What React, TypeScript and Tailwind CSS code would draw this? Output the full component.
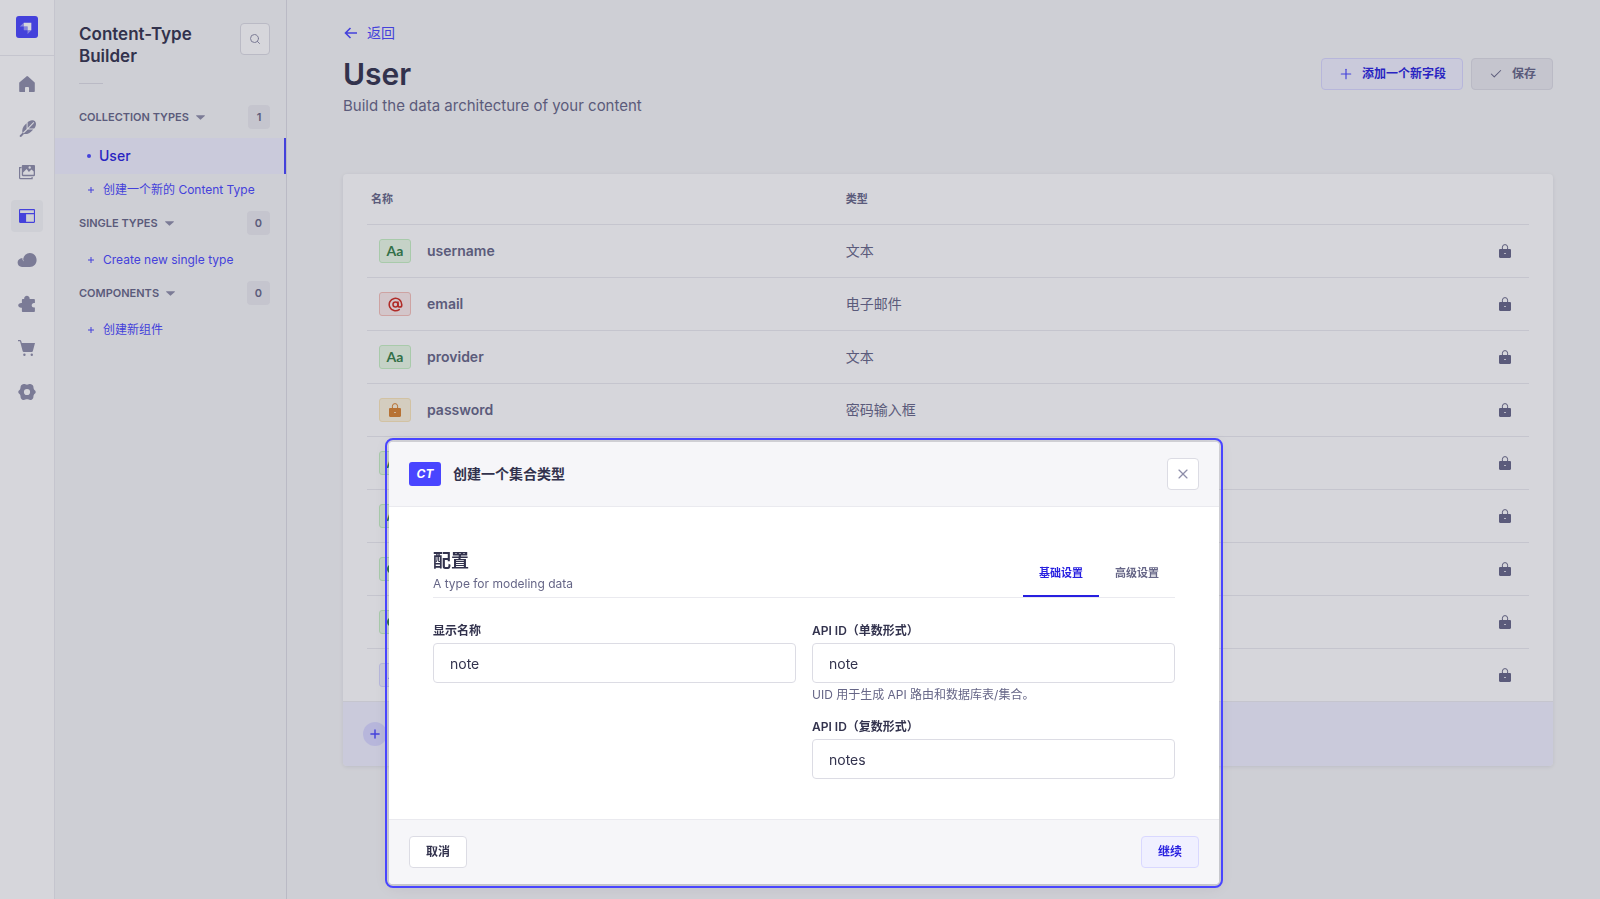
import type { ReactNode } from "react";
import { AtSign, Check, Plus, Search, X } from "lucide-react";
import clsx from "clsx";

type FieldKind = "text" | "email" | "password" | "boolean" | "relation";

const FIELDS: { name: string; type: string; kind: FieldKind }[] = [
  { name: "username", type: "文本", kind: "text" },
  { name: "email", type: "电子邮件", kind: "email" },
  { name: "provider", type: "文本", kind: "text" },
  { name: "password", type: "密码输入框", kind: "password" },
  { name: "", type: "", kind: "text" },
  { name: "", type: "", kind: "text" },
  { name: "", type: "", kind: "boolean" },
  { name: "", type: "", kind: "boolean" },
  { name: "", type: "", kind: "relation" },
];

const BADGE_STYLES: Record<FieldKind, string> = {
  text: "bg-[#eafbe7] border-[#c6f0c2] text-[#328048]",
  email: "bg-[#fcecea] border-[#f5c0b8] text-[#d02b20]",
  password: "bg-[#fdf4dc] border-[#fae7b9] text-[#d9822f]",
  boolean: "bg-[#eafbe7] border-[#c6f0c2] text-[#328048]",
  relation: "bg-[#f0f0ff] border-[#d9d8ff] text-[#4945ff]",
};

const NAV_ICONS: { label: string; icon: ReactNode }[] = [
  {
    label: "Home",
    icon: <path d="M8 0 .6 6.2a1 1 0 0 0-.4.8v8c0 .6.4 1 1 1H6v-4.2c0-.5.4-.9.9-.9h2.2c.5 0 .9.4.9.9V16h4.8c.6 0 1-.4 1-1V7a1 1 0 0 0-.4-.8L9.1.4A1.7 1.7 0 0 0 8 0z" />,
  },
  {
    label: "Content Manager",
    icon: (
      <>
        <path d="M13 .2c2.200-.4 4 1.400 4 3.600 0 1.800-.6 3.400-1.800 4.600H9.700L15.200 2.700l-.7-.6L8.600 8V2.300C9.800 1 11.300.400 13 .2zM7.600 3.300v5.600l-4.200 4.200c-.6-3.400.5-6.200 2.900-8.500l1.300-1.300zM8.800 9.400h5.400l-.9 1c-2.300 2.500-4.900 4-8.400 3.600L2.300 16.700H.800v-1.100L3.400 13.100l1 .6 4.400-4.300z" />
        <path d="M1.200 16.400 4.500 13" stroke="currentColor" strokeWidth="1.200" />
      </>
    ),
  },
  {
    label: "Media Library",
    icon: (
      <>
        <path d="M2.600 3.600H.6v10.100c0 .6.4 1 1 1h11.500v-1.600" fill="none" stroke="currentColor" strokeWidth="1.2" />
        <path fillRule="evenodd" d="M3.900 1h11c.7 0 1.100.5 1.100 1.100v9c0 .6-.4 1.100-1.100 1.100h-11c-.6 0-1.100-.5-1.100-1.100v-9C2.800 1.500 3.300 1 3.900 1zm.2 9.800h10.600V7.400l-2.200-2L9.900 7.900 7.600 5.100 4.100 8.600v2.200zM10.700 2.300a1.200 1.200 0 1 0 0 2.400 1.200 1.200 0 0 0 0-2.400z" />
      </>
    ),
  },
  {
    label: "Content-Type Builder",
    icon: (
      <path fillRule="evenodd" d="M1.200 1h13.700c.6 0 1.100.5 1.100 1.100v11.700c0 .6-.5 1.100-1.100 1.100H1.200C.5 14.900 0 14.400 0 13.800V2.100C0 1.500.5 1 1.200 1zM1.100 2.300V5h13.800V2.300H1.100zm6 3.900v7.600h7.800V6.200H7.100z" />
    ),
  },
  {
    label: "Cloud",
    icon: <path d="M10.800 1a6.600 6.600 0 0 0-6.600 5.900c-.1.800.2 1.700.8 2.400-1-.6-1.700-1.700-1.600-3.200C.6 6.200-1.400 8.200-1.400 10.600c0 2.500 1.900 4.400 4.400 4.400h7.800c3.900 0 6.800-3.200 6.800-7S14.700 1 10.800 1z" />,
  },
  {
    label: "Plugins",
    icon: <path d="M7.900-.3C9.300-.3 10.500.7 10.600 2.100v.8h4.200c.7 0 1.100.5 1.100 1.100v2.900h-.9c-1.300 0-2.300 1-2.300 2.300s1 2.300 2.300 2.300h.9V15c0 .7-.5 1.100-1.100 1.100H4c-.7 0-1.100-.4-1.100-1.100v-3.200h-.8C.6 11.800-.8 10.700-.8 9.300S.6 6.900 2.100 6.900h.8V4c0-.6.4-1.100 1.100-1.100h1.200v-.8C5.300.7 6.500-.3 7.900-.3z" />,
  },
  {
    label: "Marketplace",
    icon: (
      <>
        <path d="M-1 .1h2c.6 0 1 .3 1.200.9l.6 2.100H16l-2.200 8.200c-.1.500-.5.800-1 .8H4.700c-.5 0-.9-.3-1-.8L1 1.300h-2z" />
        <circle cx="5.400" cy="14.700" r="1.200" />
        <circle cx="12.800" cy="14.700" r="1.200" />
      </>
    ),
  },
  {
    label: "Settings",
    icon: (
      <path fillRule="evenodd" d="M4.800 0c1.200 0 1.900.7 3.200.7S10 0 11.200 0c1.300 0 2.600 1 3 2.100.4 1.200.1 2 .7 3.100.6 1.200 1.800 1.200 1.800 2.800s-1.200 1.600-1.800 2.800c-.6 1.100-.3 1.900-.7 3.100-.4 1.100-1.700 2.100-3 2.100-1.200 0-1.900-.7-3.200-.7s-2 .7-3.200.7c-1.300 0-2.600-1-3-2.100-.4-1.200-.1-2-.7-3.100C.5 9.600-.7 9.600-.7 8s1.200-1.600 1.800-2.800c.6-1.100.3-1.900.7-3.100C2.200 1 3.500 0 4.800 0zM8 4.900a3.100 3.100 0 1 0 0 6.200 3.100 3.100 0 0 0 0-6.200z" />
    ),
  },
];

function Logo() {
  return (
    <svg viewBox="0 0 600 600" className="size-[22px]" aria-label="Strapi">
      <rect width="600" height="600" rx="80" fill="#4945ff" />
      <path fill="#fff" d="M414 182H212v103h103v103h103V186c0-2-2-4-4-4z" />
      <path fill="#fff" opacity=".45" d="M212 182v103H110.600c-1.800 0-2.700-2-1.400-3.400L212 182zM212 285h99c2 0 4 1.800 4 4v99h-99c-2.200 0-4-1.800-4-4v-99zM315 388h103l-99.600 102.300c-1.300 1.300-3.400.4-3.400-1.400V388z" />
    </svg>
  );
}

function Lock({ className }: { className?: string }) {
  return (
    <svg viewBox="0 0 12 14" fill="currentColor" className={clsx("block h-[14px] w-3", className)} aria-hidden="true">
      <path fillRule="evenodd" d="M1.200 5h9.600c.7 0 1.200.5 1.200 1.200v6.600c0 .7-.5 1.200-1.200 1.200H1.200C.5 14 0 13.500 0 12.800V6.200C0 5.500.5 5 1.200 5zM5 8.900v.8h2v-.8H5z" />
      <path d="M3.400 5.500V3.200a2.600 2.600 0 0 1 5.200 0v2.300" fill="none" stroke="currentColor" strokeWidth="1" />
    </svg>
  );
}

function FieldBadge({ kind }: { kind: FieldKind }) {
  return (
    <span className={clsx("flex h-6 w-8 shrink-0 items-center justify-center rounded-[3px] border", BADGE_STYLES[kind])}>
      {kind === "text" && <span className="font-['Lato'] text-sm font-bold">Aa</span>}
      {kind === "email" && <AtSign size={15} strokeWidth={2.5} />}
      {kind === "password" && <Lock />}
      {kind === "boolean" && (
        <svg viewBox="0 0 16 10" className="h-[10px] w-4" fill="currentColor">
          <path fillRule="evenodd" d="M5 0h6a5 5 0 0 1 0 10H5A5 5 0 0 1 5 0zm6 2a3 3 0 1 0 0 6 3 3 0 0 0 0-6z" />
        </svg>
      )}
      {kind === "relation" && (
        <svg viewBox="0 0 14 14" className="size-[14px]" fill="none" stroke="currentColor" strokeWidth="2">
          <path d="m1 11 3-3M6 4l2-2a3 3 0 0 1 4 4l-2 2M8 10l-2 2a3 3 0 0 1-4-1M5 9l4-4" />
        </svg>
      )}
    </span>
  );
}

function MenuSection({ title, count, action, children }: { title: string; count: number; action: string; children?: ReactNode }) {
  return (
    <li>
      <div className="mb-[9px] flex h-6 items-center justify-between pr-4 pl-6">
        <button className="flex items-center gap-[7px] text-[11px] font-semibold text-[#666687] uppercase">
          {title}
          <svg viewBox="0 0 10 5" className="h-[5px] w-[9px]" fill="#8e8ea9">
            <path d="M.6 0h8.800c.4 0 .6.500.3.800L5.400 4.800a.6.600 0 0 1-.8 0L.3.8C0 .5.2 0 .6 0z" />
          </svg>
        </button>
        <span className="flex h-6 min-w-[22px] items-center justify-center rounded bg-[#eaeaef] px-2 text-[11px] font-semibold text-[#666687]">
          {count}
        </span>
      </div>
      {children}
      <a href="#create" className="flex h-8 items-center gap-2 pl-8 text-xs text-[#4945ff]">
        <svg viewBox="0 0 8 8" className="size-2" stroke="currentColor" strokeWidth="1" aria-hidden="true">
          <path d="M4 1v6M1 4h6" />
        </svg>
        {action}
      </a>
    </li>
  );
}

function TextField({ id, label, value, hint }: { id: string; label: string; value: string; hint?: string }) {
  return (
    <div className="flex flex-col gap-1">
      <label htmlFor={id} className="text-xs leading-4 font-semibold text-[#32324d]">
        {label}
      </label>
      <input
        id={id}
        defaultValue={value}
        className="h-10 w-full rounded border border-[#dcdce4] bg-white px-4 text-sm text-[#32324d] outline-none"
      />
      {hint && <p className="text-xs leading-4 text-[#666687]">{hint}</p>}
    </div>
  );
}

function CreateModal() {
  return (
    <div className="fixed inset-0 flex items-start justify-center bg-[#32324d]/20 pt-[442px] pl-2">
      <div
        role="dialog"
        aria-modal="true"
        aria-labelledby="modal-title"
        className="w-[830px] rounded bg-white shadow-[0_2px_15px_rgba(33,33,52,0.1)] outline-2 outline-offset-2 outline-[#4945ff]"
      >
        <header className="flex items-center justify-between rounded-t border-b border-[#eaeaef] bg-[#f6f6f9] px-5 py-4">
          <div className="flex items-center gap-3">
            <span className="flex h-6 w-8 items-center justify-center rounded-[3px] bg-[#4945ff] text-xs font-bold text-white italic">CT</span>
            <h2 id="modal-title" className="text-sm font-semibold text-[#32324d]">创建一个集合类型</h2>
          </div>
          <button aria-label="Close" className="flex size-8 items-center justify-center rounded border border-[#dcdce4] bg-white text-[#8e8ea9]">
            <X size={16} strokeWidth={1.75} />
          </button>
        </header>

        <div className="px-11 pt-[42px] pb-10">
          <div className="flex items-center justify-between border-b border-[#eaeaef]">
            <div className="pb-1">
              <h3 className="text-lg leading-[22px] font-semibold text-[#32324d]">配置</h3>
              <p className="mt-1 text-xs leading-4 text-[#666687]">A type for modeling data</p>
            </div>
            <div role="tablist" className="flex text-[11px] leading-4 font-semibold">
              <button role="tab" aria-selected="true" className="border-b-2 border-[#271fe0] px-4 pt-4 pb-[14px] text-[#271fe0]">
                基础设置
              </button>
              <button role="tab" aria-selected="false" className="border-b-2 border-transparent px-4 pt-4 pb-[14px] text-[#666687]">
                高级设置
              </button>
            </div>
          </div>
          <div className="mt-[25px] grid grid-cols-2 gap-4">
            <TextField id="displayName" label="显示名称" value="note" />
            <div className="flex flex-col gap-4">
              <TextField id="singularName" label="API ID（单数形式）" value="note" hint="UID 用于生成 API 路由和数据库表/集合。" />
              <TextField id="pluralName" label="API ID（复数形式）" value="notes" />
            </div>
          </div>
        </div>

        <footer className="flex justify-between rounded-b border-t border-[#eaeaef] bg-[#f6f6f9] px-5 py-4 text-xs font-semibold">
          <button className="h-8 rounded border border-[#dcdce4] bg-white px-4 text-[#32324d]">取消</button>
          <button className="h-8 rounded border border-[#d9d8ff] bg-[#f0f0ff] px-4 text-[#271fe0]">继续</button>
        </footer>
      </div>
    </div>
  );
}

export default function App() {
  return (
    <div className="flex min-h-screen bg-[#f6f7f8] font-['Inter','Noto_Sans_CJK_SC',sans-serif] text-[#32324d]">
      <nav className="flex w-[55px] shrink-0 flex-col border-r border-[#eaeaef] bg-white">
        <div className="flex justify-center border-b border-[#eaeaef] pt-4 pb-[17px]">
          <Logo />
        </div>
        <ul className="flex flex-col items-center gap-3 pt-3">
          {NAV_ICONS.map(({ label, icon }) => {
            const active = label === "Content-Type Builder";
            return (
              <li key={label}>
                <a
                  href="#nav"
                  aria-label={label}
                  className={clsx("flex size-8 items-center justify-center rounded", active ? "bg-[#f6f7f8] text-[#4945ff]" : "text-[#8e8ea9]")}
                >
                  <svg viewBox="0 0 16 16" className="size-4 overflow-visible" fill="currentColor">
                    {icon}
                  </svg>
                </a>
              </li>
            );
          })}
        </ul>
      </nav>

      <aside className="w-[232px] shrink-0 border-r border-[#dcdce4] pt-[23px]">
        <div className="flex items-start justify-between pr-4 pl-6">
          <h2 className="text-[17px] leading-[22px] font-semibold">
            Content-Type
            <br />
            Builder
          </h2>
          <button aria-label="Search" className="flex h-8 w-[30px] items-center justify-center rounded border border-[#dcdce4] bg-white text-[#8e8ea9]">
            <Search size={12} strokeWidth={2} />
          </button>
        </div>
        <hr className="mt-4 mb-[21px] ml-6 w-6 border-[#dcdce4]" />
        <ul className="flex flex-col gap-[5px]">
          <MenuSection title="Collection Types" count={1} action="创建一个新的 Content Type">
            <a href="#user" className="flex h-9 items-center gap-2 border-r-2 border-[#4945ff] bg-[#f0f0ff] pl-8 text-sm font-medium text-[#271fe0]">
              <span className="size-1 rounded-full bg-[#4945ff]" />
              User
            </a>
          </MenuSection>
          <MenuSection title="Single Types" count={0} action="Create new single type" />
          <MenuSection title="Components" count={0} action="创建新组件" />
        </ul>
      </aside>

      <main className="min-w-0 flex-1 pt-[23px] pr-[47px] pl-14">
        <a href="#back" className="flex w-fit items-center gap-2 text-sm leading-5 text-[#4945ff]">
          <svg viewBox="0 0 16 16" className="size-4" fill="none" stroke="currentColor" strokeWidth="1.6" aria-hidden="true">
            <path d="M14 8H2.500M7.500 3l-5 5 5 5" />
          </svg>
          返回
        </a>
        <div className="mt-[11px] flex items-center justify-between">
          <h1 className="text-3xl leading-10 font-semibold">User</h1>
          <div className="flex gap-2 text-xs font-semibold">
            <button className="flex h-8 items-center gap-2 rounded border border-[#d9d8ff] bg-[#f0f0ff] px-4 text-[#271fe0]">
              <Plus size={16} strokeWidth={1.75} className="text-[#4945ff]" />
              添加一个新字段
            </button>
            <button disabled className="flex h-8 items-center gap-2 rounded border border-[#dcdce4] bg-[#eaeaef] px-4 text-[#666687]">
              <span className="flex w-4 justify-center">
                <Check size={14} strokeWidth={1.75} />
              </span>
              保存
            </button>
          </div>
        </div>
        <p className="text-[15px] leading-6 text-[#666687]">Build the data architecture of your content</p>

        <section className="mt-14 overflow-hidden rounded bg-white shadow-[0_1px_4px_rgba(33,33,52,0.1)]">
          <div className="px-6">
            <table className="w-full table-fixed border-separate border-spacing-0 text-left text-[#666687]">
              <thead>
                <tr className="text-[11px]">
                  <th className="h-[51px] w-2/5 border-b border-[#eaeaef] pl-1 font-semibold">名称</th>
                  <th className="border-b border-[#eaeaef] pl-[14px] font-semibold">类型</th>
                  <th className="w-20 border-b border-[#eaeaef]" />
                </tr>
              </thead>
              <tbody className="text-sm">
                {FIELDS.map(({ name, type, kind }, i) => {
                  const cell = i < FIELDS.length - 1 ? "h-[53px] border-b border-[#eaeaef]" : "h-[52px]";
                  return (
                    <tr key={i}>
                      <td className={clsx(cell, "pl-3")}>
                        <div className="flex items-center gap-4 font-semibold">
                          <FieldBadge kind={kind} />
                          {name}
                        </div>
                      </td>
                      <td className={clsx(cell, "pl-[14px]")}>{type}</td>
                      <td className={clsx(cell, "pr-[18px]")}>
                        <Lock className="ml-auto" />
                      </td>
                    </tr>
                  );
                })}
              </tbody>
            </table>
          </div>
          <button aria-label="添加一个新字段" className="flex h-[65px] w-full items-center border-t border-[#eaeaef] bg-[#f0f0ff] px-5">
            <span className="flex size-6 items-center justify-center rounded-full bg-[#d9d8ff] text-[#4945ff]">
              <Plus size={14} strokeWidth={2.5} />
            </span>
          </button>
        </section>
      </main>

      <CreateModal />
    </div>
  );
}
